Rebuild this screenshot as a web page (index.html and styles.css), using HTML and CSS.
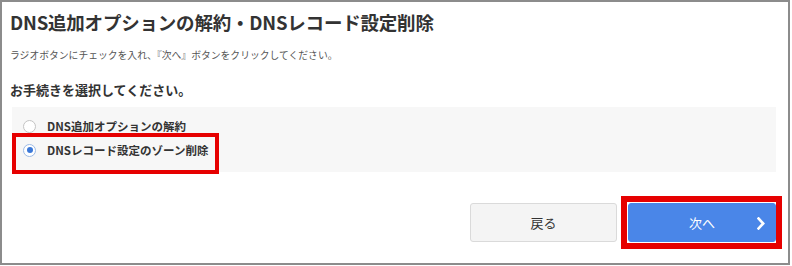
FILE: index.html
```html
<!DOCTYPE html>
<html lang="ja">
<head>
<meta charset="utf-8">
<title>DNS追加オプションの解約・DNSレコード設定削除</title>
<link rel="stylesheet" href="styles.css">
</head>
<body>
<div class="panel">
  <h1 class="title">DNS追加オプションの解約・DNSレコード設定削除</h1>
  <p class="lead">ラジオボタンにチェックを入れ、『次へ』ボタンをクリックしてください。</p>
  <h2 class="heading">お手続きを選択してください。</h2>
  <div class="choices">
    <label class="choice">
      <span class="radio"></span>
      <span class="choice-text">DNS追加オプションの解約</span>
    </label>
    <label class="choice choice-marked">
      <span class="radio radio-on"></span>
      <span class="choice-text">DNSレコード設定のゾーン削除</span>
      <span class="mark mark-choice"></span>
    </label>
  </div>
  <div class="actions">
    <button class="btn btn-back" type="button">戻る</button>
    <button class="btn btn-next" type="button">次へ
      <svg class="chev" width="8" height="13" viewBox="0 0 8 13"><polyline points="1.5,1.5 6.2,6.5 1.5,11.5" fill="none" stroke="#fff" stroke-width="2.6" stroke-linecap="square"/></svg>
      <span class="mark mark-btn"></span>
    </button>
  </div>
</div>
</body>
</html>
```

FILE: styles.css
```css
html, body {
  margin: 0;
  padding: 0;
  background: #fff;
}
body {
  font-family: "Noto Sans CJK JP", "Noto Sans", sans-serif;
  color: #333;
}
.panel {
  box-sizing: border-box;
  width: 790px;
  height: 265px;
  border: 2px solid #8c8c8c;
  padding: 8px 12px 0 8px;
}
.title {
  margin: 0;
  font-size: 18.5px;
  line-height: 24px;
  font-weight: bold;
  color: #333;
  letter-spacing: -0.2px;
}
.lead {
  margin: 14px 0 0;
  font-size: 9.8px;
  line-height: 14px;
  color: #555;
}
.heading {
  margin: 19px 0 0;
  font-size: 13px;
  line-height: 18px;
  font-weight: 600;
  color: #333;
}
.choices {
  margin: 8px 0 0 2px;
  background: #f7f7f7;
  height: 65px;
  box-sizing: border-box;
  padding-top: 7px;
}
.choice {
  position: relative;
  display: flex;
  align-items: center;
  height: 24px;
  padding-left: 11px;
}
.radio {
  box-sizing: border-box;
  width: 13px;
  height: 13px;
  border-radius: 50%;
  border: 1px solid #c4c4c4;
  background: #fff;
  position: relative;
  flex: none;
}
.radio-on {
  border-color: #9dbbe6;
}
.radio-on::after {
  content: "";
  position: absolute;
  left: 2.5px;
  top: 2.5px;
  width: 6px;
  height: 6px;
  border-radius: 50%;
  background: #3b78d8;
}
.choice-text {
  margin-left: 11px;
  font-size: 11.5px;
  font-weight: bold;
  color: #333;
}
.mark {
  position: absolute;
  border: solid #e60000;
  pointer-events: none;
}
.mark-choice {
  left: 0;
  top: -5px;
  width: 207px;
  height: 41px;
  box-sizing: border-box;
  border-width: 4px;
}
.actions {
  display: flex;
  justify-content: flex-end;
  gap: 11px;
  margin-top: 31px;
}
.btn {
  position: relative;
  box-sizing: border-box;
  height: 39px;
  border-radius: 3px;
  font-family: "Noto Sans CJK JP", "Noto Sans", sans-serif;
  font-size: 13px;
  padding: 0;
  cursor: pointer;
}
.btn-back {
  width: 147px;
  background: #f4f4f4;
  border: 1px solid #dadada;
  color: #333;
}
.btn-next {
  width: 148px;
  background: #4a86e8;
  border: 1px solid #4a86e8;
  color: #fff;
}
.chev {
  position: absolute;
  right: 10px;
  top: 13px;
}
.mark-btn {
  left: -8px;
  top: -8px;
  right: -7px;
  bottom: -8px;
  border-width: 6px;
}
```
